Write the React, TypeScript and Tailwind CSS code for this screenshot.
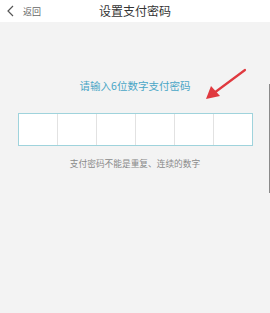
import React from 'react';

const cells = [0, 1, 2, 3, 4, 5];

export default function App() {
  return (
    <div
      className="relative w-[270px] h-[313px] bg-[#f3f3f3] overflow-hidden"
      style={{ fontFamily: '"Noto Sans CJK SC", "Noto Sans", sans-serif' }}
    >
      {/* Header */}
      <div className="relative h-[22px] bg-white flex items-center">
        <div className="flex items-center pl-[6px]">
          <svg width="10" height="12" viewBox="0 0 10 12" fill="none">
            <path d="M7 1 L2 6 L7 11" stroke="#555" strokeWidth="1.2" />
          </svg>
          <span className="ml-[7px] text-[9px] leading-none text-[#666]">返回</span>
        </div>
        <div className="absolute inset-0 flex items-center justify-center">
          <span className="text-[12px] leading-none text-[#333]">设置支付密码</span>
        </div>
      </div>

      {/* Body */}
      <div className="flex flex-col items-center">
        <div className="mt-[59px] text-[10.5px] leading-none text-[#4aa6c6]">请输入6位数字支付密码</div>
        <div className="mt-[21px] ml-[1px] w-[235px] h-[33px] border border-[#9fd3dc] bg-white flex">
          {cells.map((i) => (
            <div
              key={i}
              className={`flex-1 ${i < 5 ? 'border-r border-[#e2e2e2]' : ''}`}
            />
          ))}
        </div>
        <div className="mt-[14px] text-[8.7px] leading-none text-[#8a8a8a]">支付密码不能是重复、连续的数字</div>
      </div>

      {/* Red arrow annotation */}
      <svg className="absolute left-[200px] top-[64px]" width="50" height="40" viewBox="0 0 50 40">
        <line x1="45" y1="6" x2="14" y2="29" stroke="#e0393f" strokeWidth="2.2" strokeLinecap="round" />
        <polygon points="6,35 11,22 20,32" fill="#e0393f" />
      </svg>

      {/* Scroll indicator */}
      <div className="absolute right-0 top-[84px] w-[1.5px] h-[109px] bg-[#8a8a8a]" />
    </div>
  );
}
